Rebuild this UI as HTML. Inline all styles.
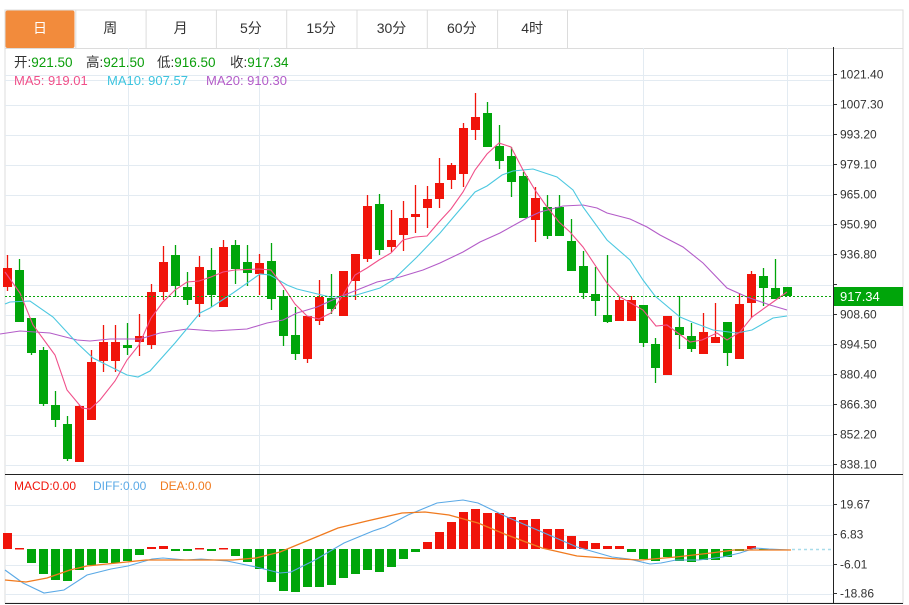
<!DOCTYPE html>
<html><head><meta charset="utf-8"><style>
html,body{margin:0;padding:0;background:#fff;width:909px;height:605px;overflow:hidden;font-family:"Liberation Sans","Noto Sans CJK SC",sans-serif}
svg{position:absolute;left:0;top:0}
</style></head><body>
<svg id="s" width="909" height="605" xmlns="http://www.w3.org/2000/svg" font-family="Liberation Sans, Noto Sans CJK SC, sans-serif">
<rect x="5" y="10" width="898" height="593" fill="#fff" stroke="#dcdcdc"/>
<g id="tabs"></g>
<g id="grid" stroke="#e3ebf2" stroke-width="1"></g>
<g id="main"></g>
<g id="macd"></g>
<text x="14" y="67" font-size="13.5" fill="#333">开:<tspan fill="#0a9e0a">921.50</tspan></text>
<text x="86" y="67" font-size="13.5" fill="#333">高:<tspan fill="#0a9e0a">921.50</tspan></text>
<text x="157" y="67" font-size="13.5" fill="#333">低:<tspan fill="#0a9e0a">916.50</tspan></text>
<text x="230" y="67" font-size="13.5" fill="#333">收:<tspan fill="#0a9e0a">917.34</tspan></text>
<text x="14" y="85" font-size="13" fill="#f0508a">MA5: 919.01</text>
<text x="107" y="85" font-size="13" fill="#3cc4df">MA10: 907.57</text>
<text x="206" y="85" font-size="13" fill="#b35cc8">MA20: 910.30</text>
<text x="14" y="490" font-size="12" fill="#f0140a">MACD:0.00</text>
<text x="93" y="490" font-size="12" fill="#5aa9e6">DIFF:0.00</text>
<text x="160" y="490" font-size="12" fill="#f07a1e">DEA:0.00</text>
</svg>
<script>
var NS="http://www.w3.org/2000/svg";
function el(p,t,a,txt){var e=document.createElementNS(NS,t);for(var k in a)e.setAttribute(k,a[k]);if(txt!=null)e.textContent=txt;document.getElementById(p).appendChild(e);return e;}
var tl=["日","周","月","5分","15分","30分","60分","4时"];
el("tabs","line",{x1:5,y1:48.5,x2:903,y2:48.5,stroke:"#dcdcdc"});
for(var i=0;i<8;i++){var x=5+i*70.3;
 if(i==0)el("tabs","rect",{x:5.5,y:10.5,width:69,height:37.5,fill:"#f28b3c",rx:2});
 else el("tabs","line",{x1:x+0.5,y1:10,x2:x+0.5,y2:48,stroke:"#dcdcdc"});
 el("tabs","text",{x:x+35,y:33,"font-size":14,fill:i==0?"#fff":"#333","text-anchor":"middle"},tl[i]);}
el("tabs","line",{x1:567.5,y1:10,x2:567.5,y2:48,stroke:"#dcdcdc"});
var pl=["1021.40","1007.30","993.20","979.10","965.00","950.90","936.80","922.70","908.60","894.50","880.40","866.30","852.20","838.10"];
for(var i=0;i<14;i++){var y=74+30*i;el("grid","line",{x1:5,y1:y+1.5,x2:833,y2:y+1.5});
 el("main","line",{x1:833,y1:y+.5,x2:837,y2:y+.5,stroke:"#333"});
 if(i!=7)el("main","text",{x:840,y:y+4.5,"font-size":12,fill:"#333"},pl[i]);}
[504,534,564,593].forEach(function(y,i){el("grid","line",{x1:5,y1:y+1.5,x2:833,y2:y+1.5});
 el("macd","line",{x1:833,y1:y+.5,x2:837,y2:y+.5,stroke:"#333"});
 el("macd","text",{x:840,y:y+4.5,"font-size":12,fill:"#333"},["19.67","6.83","-6.01","-18.86"][i]);});
[128,259,643,787].forEach(function(x){el("grid","line",{x1:x+.5,y1:48,x2:x+.5,y2:603});});
el("grid","line",{x1:5,y1:80.5,x2:833,y2:80.5});
el("main","line",{x1:833.5,y1:47,x2:833.5,y2:603,stroke:"#222"});
el("main","line",{x1:5,y1:474.5,x2:903,y2:474.5,stroke:"#222"});
el("main","line",{x1:5,y1:603.5,x2:903,y2:603.5,stroke:"#222"});
var C=[[268,287,255,291,1],[270,322,259,322,0],[318,353,318,355,0],[350,404,347,406,0],[405,420,391,427,0],[424,459,416,461,0],[406,462,405,462,1],[362,420,350,420,1],[342,361,325,372,1],[342,361,325,372,1],[345,348,323,355,0],[336,342,314,356,1],[292,345,284,349,1],[262,292,246,300,1],[255,286,245,297,0],[287,300,272,305,0],[267,304,256,317,1],[270,295,248,307,0],[247,307,240,307,1],[245,269,240,284,0],[262,273,245,286,0],[263,274,254,295,1],[261,299,243,310,0],[296,336,290,346,0],[335,354,307,360,0],[316,359,316,363,1],[297,321,280,325,1],[298,309,274,314,0],[271,316,271,316,1],[254,281,254,300,1],[206,259,195,262,1],[204,250,194,255,0],[240,247,210,252,1],[218,235,201,251,1],[214,217,185,233,1],[199,208,186,228,1],[183,199,158,208,1],[165,180,163,189,1],[128,174,123,187,1],[117,130,93,140,1],[113,147,102,147,0],[146,161,125,169,0],[156,182,147,197,0],[176,218,172,218,0],[198,220,187,242,1],[207,236,195,239,0],[207,236,195,236,0],[241,271,219,271,0],[266,293,251,299,0],[294,301,267,316,0],[315,322,255,323,0],[300,321,296,321,1],[300,321,296,321,1],[305,343,305,347,0],[344,368,338,383,0],[316,375,316,375,1],[327,335,296,349,0],[336,349,323,352,0],[332,354,313,354,1],[337,343,303,343,1],[322,353,322,366,0],[304,359,293,359,1],[274,303,271,318,1],[276,288,268,306,0],[288,299,259,299,0],[287,296,287,296,0]];
function pts(a){return a.map(function(p){return p.join(",")}).join(" ");}
var ma20=[[0,334],[20,331],[50,333],[77,340],[90,341],[110,339],[140,339],[160,333],[187,329],[213,331],[247,329],[267,323],[283,320],[297,313],[317,307],[337,298],[377,282],[400,277],[423,270],[440,263],[463,252],[480,242],[500,233],[527,218],[540,212],[563,206],[583,205],[597,208],[607,213],[630,219],[647,227],[660,235],[683,247],[703,263],[727,288],[747,297],[770,305],[787,310]];
var ma10=[[5,304],[10,302],[30,301],[53,317],[77,343],[93,358],[127,375],[138,377],[150,371],[175,343],[200,313],[210,308],[233,293],[260,274],[270,275],[287,285],[297,289],[330,297],[353,296],[380,288],[393,280],[417,257],[440,233],[457,213],[475,192],[487,186],[502,175],[513,171],[533,169],[557,177],[573,190],[583,207],[607,240],[630,260],[643,280],[655,296],[680,317],[692,322],[713,330],[737,333],[752,330],[773,318],[787,316]];
var ma5=[[5,272],[20,293],[33,325],[55,355],[67,390],[82,408],[90,409],[100,400],[115,381],[127,360],[139,345],[151,318],[163,302],[175,290],[187,282],[199,281],[211,277],[223,272],[235,270],[259,269],[271,270],[283,286],[295,304],[307,316],[319,319],[331,313],[343,295],[355,275],[367,268],[379,260],[391,253],[403,240],[415,237],[427,236],[439,222],[451,209],[463,192],[475,170],[487,154],[499,143],[511,147],[523,170],[535,190],[547,207],[559,222],[570,232],[583,247],[607,283],[620,297],[643,310],[656,326],[667,325],[690,342],[702,340],[717,333],[727,340],[740,332],[752,317],[773,302],[787,292]];
C.forEach(function(c,i){var x=7.5+12*i,col=c[4]?"#f0140a":"#00a50a";
 el("main","line",{x1:x,y1:c[2],x2:x,y2:c[3],stroke:col,"stroke-width":1.3});
 el("main","rect",{x:x-4.5,y:c[0],width:9,height:Math.max(1,c[1]-c[0]),fill:col});});
el("main","polyline",{points:pts(ma20),fill:"none",stroke:"#b35cc8","stroke-width":1.1});
el("main","polyline",{points:pts(ma10),fill:"none",stroke:"#4cc8e0","stroke-width":1.1});
el("main","polyline",{points:pts(ma5),fill:"none",stroke:"#f0508a","stroke-width":1.1});
el("main","line",{x1:5,y1:296.5,x2:833,y2:296.5,stroke:"#0aa50a","stroke-dasharray":"2,2"});
el("main","rect",{x:834,y:287,width:69,height:19,fill:"#00a50a"});
el("main","text",{x:840,y:301,"font-size":13,fill:"#fff"},"917.34");
var M=[533,548,563,574,580,581,570,565,563,563,561,555,547,546,551,551,548,551,548,556,562,569,582,591,592,587,587,585,578,574,570,572,567,559,552,542,532,522,512,509,513,513,517,520,519,529,529,536,541,543,546,546,552,559,561,557,561,562,560,560,557,551,546,549];
var Z=549;
M.forEach(function(y,i){var x=7.5+12*i,up=y<Z;
 el("macd","rect",{x:x-4.5,y:Math.min(y,Z),width:9,height:Math.max(1.5,Math.abs(y-Z)),fill:up?"#f0140a":"#00a50a"});});
el("macd","line",{x1:792,y1:549.5,x2:833,y2:549.5,stroke:"#a8dcea","stroke-width":1.5,"stroke-dasharray":"3,3"});
var diff=[[5,570],[23,583],[44,593],[64,590],[87,575],[111,569],[128,566],[152,559],[163,558],[186,560],[201,559],[227,561],[256,567],[280,573],[291,572],[315,560],[344,543],[373,531],[385,527],[408,515],[437,503],[463,500],[478,503],[507,517],[542,532],[577,547],[612,557],[629,559],[650,564],[661,563],[676,560],[699,560],[723,557],[740,553],[755,548],[769,549],[791,550]];
var dea=[[5,580],[26,582],[47,578],[70,570],[87,566],[117,563],[146,560],[175,560],[233,560],[256,558],[280,552],[309,540],[338,528],[367,521],[402,513],[425,512],[449,515],[478,523],[507,535],[542,548],[577,556],[618,559],[641,560],[676,557],[711,553],[734,550],[791,550]];
el("macd","polyline",{points:pts(diff),fill:"none",stroke:"#5aa9e6","stroke-width":1.1});
el("macd","polyline",{points:pts(dea),fill:"none",stroke:"#f07a1e","stroke-width":1.3});
</script>
</body></html>
